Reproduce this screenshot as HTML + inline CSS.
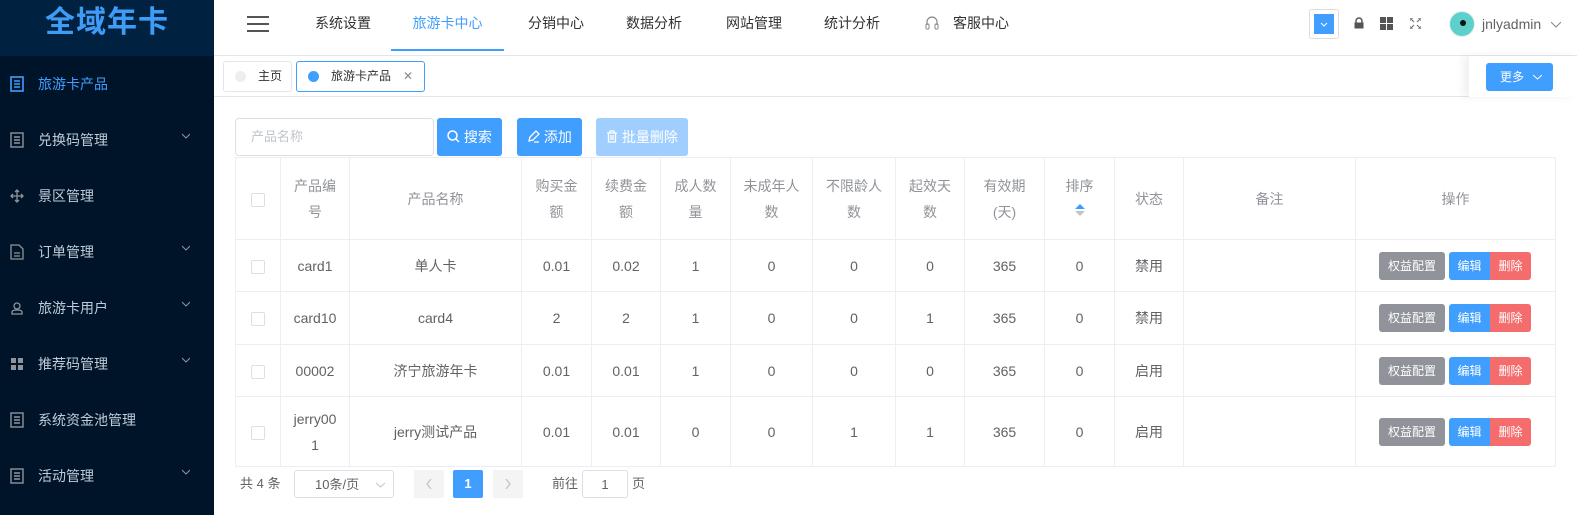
<!DOCTYPE html>
<html><head><meta charset="utf-8"><style>
*{box-sizing:border-box;margin:0;padding:0}
body{width:1577px;height:515px;overflow:hidden;background:#fff;font-family:"Liberation Sans","Noto Sans CJK SC",sans-serif;font-size:14px;color:#606266;position:relative}
.side{position:absolute;left:0;top:0;width:214px;height:515px;background:#001429}
.logo{height:56px;background:#002140;color:#3e9cf7;font-size:30px;font-weight:bold;text-align:center;line-height:46px;letter-spacing:1px}
.mi{position:absolute;left:0;width:214px;height:56px;color:#bfcbd9;font-size:14px;line-height:56px;padding-left:38px}
.mi .ic{position:absolute;left:10px;top:20px;width:14px;height:16px}
.mi .ar{position:absolute;right:24px;top:20px;width:8px;height:8px}
.top{position:absolute;left:214px;top:0;width:1363px;height:56px;border-bottom:1px solid #e6e6e6}
.nav{position:absolute;top:0;height:56px;line-height:46px;font-size:14px;color:#303133}
.tabs{position:absolute;left:214px;top:56px;width:1363px;height:41px;border-bottom:1px solid #e6e6e6}
.tab{position:absolute;top:5px;height:31px;border:1px solid #e6e6e6;border-radius:3px;font-size:12px;line-height:29px;color:#303133}
.dot{position:absolute;left:11px;top:9px;width:11px;height:11px;border-radius:50%}
.btn{position:absolute;top:118px;height:38px;border-radius:3px;background:#409eff;color:#fff;font-size:14px;line-height:38px;text-align:center}
table{position:absolute;left:235px;top:157px;width:1320px;border-collapse:collapse;table-layout:fixed}
td{border:1px solid #ebeef5;text-align:center;font-size:14px;color:#606266;line-height:26px}
thead td{color:#909399;height:82px}
.cb{display:inline-block;width:14px;height:14px;border:1px solid #dcdfe6;border-radius:2px;vertical-align:middle;background:#fff}
.op{display:inline-block;height:28px;line-height:28px;font-size:12px;color:#fff;text-align:center;vertical-align:middle}
.pg{position:absolute;top:470px;height:28px;line-height:28px;font-size:13px}
</style></head><body>
<div class="side">
<div class="logo">全域年卡</div>
<div class="mi" style="top:56px;color:#409eff"><svg class="ic" viewBox="0 0 14 16"><rect x="1" y="1" width="12" height="14" fill="none" stroke="#409eff" stroke-width="1.6"/><path d="M4 5h6M4 8h6M4 11h6" stroke="#409eff" stroke-width="1.5"/></svg>旅游卡产品</div>
<div class="mi" style="top:112px"><svg class="ic" viewBox="0 0 14 16"><rect x="1" y="1" width="12" height="14" fill="none" stroke="#909399" stroke-width="1.4"/><path d="M4 5h6M4 8h6M4 11h6" stroke="#909399" stroke-width="1.4"/></svg>兑换码管理<svg class="ar" viewBox="0 0 8 8"><path d="M0 2l4 4 4-4" fill="none" stroke="#8a96a3"/></svg></div>
<div class="mi" style="top:168px"><svg class="ic" viewBox="0 0 14 16"><path d="M7 2v12M1 8h12M5 4l2-2 2 2M5 12l2 2 2-2M3 6l-2 2 2 2M11 6l2 2-2 2" fill="none" stroke="#909399" stroke-width="1.3"/></svg>景区管理</div>
<div class="mi" style="top:224px"><svg class="ic" viewBox="0 0 14 16"><path d="M1 1h8l4 4v10H1z" fill="none" stroke="#909399" stroke-width="1.3"/><path d="M4 9h6M4 12h6" stroke="#909399" stroke-width="1.3"/></svg>订单管理<svg class="ar" viewBox="0 0 8 8"><path d="M0 2l4 4 4-4" fill="none" stroke="#8a96a3"/></svg></div>
<div class="mi" style="top:280px"><svg class="ic" viewBox="0 0 14 16"><circle cx="7" cy="6" r="3" fill="none" stroke="#909399" stroke-width="1.3"/><path d="M2 14v-2q0-2 5-2t5 2v2z" fill="none" stroke="#909399" stroke-width="1.3"/></svg>旅游卡用户<svg class="ar" viewBox="0 0 8 8"><path d="M0 2l4 4 4-4" fill="none" stroke="#8a96a3"/></svg></div>
<div class="mi" style="top:336px"><svg class="ic" viewBox="0 0 14 16"><rect x="1" y="2" width="5" height="5" fill="#909399"/><rect x="8" y="2" width="5" height="5" fill="#909399"/><rect x="1" y="9" width="5" height="5" fill="#909399"/><rect x="8" y="9" width="5" height="5" fill="#909399"/></svg>推荐码管理<svg class="ar" viewBox="0 0 8 8"><path d="M0 2l4 4 4-4" fill="none" stroke="#8a96a3"/></svg></div>
<div class="mi" style="top:392px"><svg class="ic" viewBox="0 0 14 16"><rect x="1" y="1" width="12" height="14" fill="none" stroke="#909399" stroke-width="1.4"/><path d="M4 5h6M4 8h6M4 11h6" stroke="#909399" stroke-width="1.4"/></svg>系统资金池管理</div>
<div class="mi" style="top:448px"><svg class="ic" viewBox="0 0 14 16"><rect x="1" y="1" width="12" height="14" fill="none" stroke="#909399" stroke-width="1.4"/><path d="M4 5h6M4 8h6M4 11h6" stroke="#909399" stroke-width="1.4"/></svg>活动管理<svg class="ar" viewBox="0 0 8 8"><path d="M0 2l4 4 4-4" fill="none" stroke="#8a96a3"/></svg></div>
</div>

<div class="top">
<svg style="position:absolute;left:33px;top:15px" width="22" height="18"><path d="M0 2h22M0 9h22M0 16h22" stroke="#555" stroke-width="2"/></svg>
<div class="nav" style="left:101px">系统设置</div>
<div class="nav" style="left:177px;width:113px;text-align:center;color:#409eff;border-bottom:2px solid #409eff;height:51px">旅游卡中心</div>
<div class="nav" style="left:314px">分销中心</div>
<div class="nav" style="left:412px">数据分析</div>
<div class="nav" style="left:512px">网站管理</div>
<div class="nav" style="left:610px">统计分析</div>
<svg style="position:absolute;left:711px;top:15px" width="14" height="16"><path d="M2 10V7a5 5 0 0 1 10 0v3" fill="none" stroke="#888" stroke-width="1.2"/><rect x="1" y="9" width="3" height="5" rx="1" fill="none" stroke="#888"/><rect x="10" y="9" width="3" height="5" rx="1" fill="none" stroke="#888"/></svg>
<div class="nav" style="left:739px">客服中心</div>
<div style="position:absolute;left:1095px;top:9px;width:30px;height:30px;border:1px solid #ddd;border-radius:3px"><div style="position:absolute;left:4px;top:4px;width:20px;height:20px;background:#409eff"><svg width="20" height="20"><path d="M7 9l3 3 3-3" fill="none" stroke="#fff"/></svg></div></div>
<svg style="position:absolute;left:1139px;top:17px" width="12" height="12"><path d="M3 6V4a3 3 0 0 1 6 0v2" fill="none" stroke="#555" stroke-width="1.5"/><rect x="1.5" y="5.5" width="9" height="6" fill="#555"/></svg>
<svg style="position:absolute;left:1166px;top:17px" width="13" height="13"><rect x="0" y="0" width="6" height="6" fill="#555"/><rect x="7" y="0" width="6" height="6" fill="#555"/><rect x="0" y="7" width="6" height="6" fill="#555"/><rect x="7" y="7" width="6" height="6" fill="#555"/></svg>
<svg style="position:absolute;left:1196px;top:18px" width="11" height="11"><path d="M0 3V0h3M8 0h3v3M11 8v3H8M3 11H0V8M1 1l3 3M10 1L7 4M10 10L7 7M1 10l3-3" fill="none" stroke="#666" stroke-width="1"/></svg>
<div style="position:absolute;left:1235px;top:11px;width:26px;height:26px;border-radius:50%;background:#5ed0cc;border:1px solid #eee"></div>
<div style="position:absolute;left:1246px;top:20px;width:6px;height:6px;border-radius:50%;background:#111"></div>
<div class="nav" style="left:1268px;color:#606266;line-height:48px">jnlyadmin</div>
<svg style="position:absolute;left:1337px;top:20px" width="10" height="8"><path d="M0 2l5 5 5-5" fill="none" stroke="#888"/></svg>
</div>

<div class="tabs">
<div class="tab" style="left:9px;width:69px;padding-left:34px"><span class="dot" style="background:#eee"></span>主页</div>
<div class="tab" style="left:82px;width:129px;padding-left:34px;border-color:#409eff"><span class="dot" style="background:#409eff"></span>旅游卡产品<span style="position:absolute;right:11px;color:#888">✕</span></div>
<div style="position:absolute;left:1255px;top:0;width:108px;height:41px;box-shadow:-6px 0 8px rgba(0,0,0,.06);background:#fff"><div style="position:absolute;left:17px;top:7px;width:67px;height:28px;background:#409eff;border-radius:3px;color:#fff;font-size:12px;line-height:28px;padding-left:14px">更多<svg style="position:absolute;left:47px;top:11px" width="9" height="6"><path d="M0 1l4.5 4 4.5-4" fill="none" stroke="#fff"/></svg></div></div>
</div>

<div style="position:absolute;left:235px;top:118px;width:199px;height:38px;border:1px solid #dcdfe6;border-radius:4px;color:#c0c4cc;font-size:13px;line-height:36px;padding-left:15px">产品名称</div>
<div class="btn" style="left:437px;width:65px"><svg width="13" height="13" style="vertical-align:-1px"><circle cx="5.5" cy="5.5" r="4.5" fill="none" stroke="#fff" stroke-width="1.5"/><path d="M9 9l3 3" stroke="#fff" stroke-width="1.5"/></svg> 搜索</div>
<div class="btn" style="left:517px;width:65px"><svg width="13" height="13" style="vertical-align:-1px"><path d="M2 11l1-4 6-6 3 3-6 6zM7 12h5" fill="none" stroke="#fff" stroke-width="1.3"/></svg> 添加</div>
<div class="btn" style="left:596px;width:92px;background:#a0cfff"><svg width="12" height="13" style="vertical-align:-1px"><path d="M1 3h10M4 3V1h4v2M2.5 3v9h7V3M5 5v5M7 5v5" fill="none" stroke="#fff" stroke-width="1.3"/></svg> 批量删除</div>

<table>
<colgroup><col style="width:45px"><col style="width:69px"><col style="width:172px"><col style="width:70px"><col style="width:69px"><col style="width:70px"><col style="width:82px"><col style="width:83px"><col style="width:69px"><col style="width:80px"><col style="width:70px"><col style="width:69px"><col style="width:172px"><col style="width:200px"></colgroup>
<thead><tr><td><span class="cb"></span></td><td>产品编<br>号</td><td>产品名称</td><td>购买金<br>额</td><td>续费金<br>额</td><td>成人数<br>量</td><td>未成年人<br>数</td><td>不限龄人<br>数</td><td>起效天<br>数</td><td>有效期<br>(天)</td><td>排序<br><svg width="10" height="14"><path d="M5 1l5 5H0z" fill="#409eff"/><path d="M5 13l5-5H0z" fill="#c0c4cc"/></svg></td><td>状态</td><td>备注</td><td>操作</td></tr></thead>
<tbody>
<tr style="height:52px"><td><span class="cb"></span></td><td>card1</td><td>单人卡</td><td>0.01</td><td>0.02</td><td>1</td><td>0</td><td>0</td><td>0</td><td>365</td><td>0</td><td>禁用</td><td></td><td style="text-align:left;padding-left:23px"><span class="op" style="width:66px;background:#909399;border-radius:3px">权益配置</span><span class="op" style="width:41px;background:#409eff;margin-left:4px;border-radius:3px 0 0 3px">编辑</span><span class="op" style="width:41px;background:#f56c6c;border-radius:0 3px 3px 0">删除</span></td></tr>
<tr style="height:53px"><td><span class="cb"></span></td><td>card10</td><td>card4</td><td>2</td><td>2</td><td>1</td><td>0</td><td>0</td><td>1</td><td>365</td><td>0</td><td>禁用</td><td></td><td style="text-align:left;padding-left:23px"><span class="op" style="width:66px;background:#909399;border-radius:3px">权益配置</span><span class="op" style="width:41px;background:#409eff;margin-left:4px;border-radius:3px 0 0 3px">编辑</span><span class="op" style="width:41px;background:#f56c6c;border-radius:0 3px 3px 0">删除</span></td></tr>
<tr style="height:52px"><td><span class="cb"></span></td><td>00002</td><td>济宁旅游年卡</td><td>0.01</td><td>0.01</td><td>1</td><td>0</td><td>0</td><td>0</td><td>365</td><td>0</td><td>启用</td><td></td><td style="text-align:left;padding-left:23px"><span class="op" style="width:66px;background:#909399;border-radius:3px">权益配置</span><span class="op" style="width:41px;background:#409eff;margin-left:4px;border-radius:3px 0 0 3px">编辑</span><span class="op" style="width:41px;background:#f56c6c;border-radius:0 3px 3px 0">删除</span></td></tr>
<tr style="height:70px"><td><span class="cb"></span></td><td>jerry00<br>1</td><td>jerry测试产品</td><td>0.01</td><td>0.01</td><td>0</td><td>0</td><td>1</td><td>1</td><td>365</td><td>0</td><td>启用</td><td></td><td style="text-align:left;padding-left:23px"><span class="op" style="width:66px;background:#909399;border-radius:3px">权益配置</span><span class="op" style="width:41px;background:#409eff;margin-left:4px;border-radius:3px 0 0 3px">编辑</span><span class="op" style="width:41px;background:#f56c6c;border-radius:0 3px 3px 0">删除</span></td></tr>
</tbody></table>

<div class="pg" style="left:240px">共 4 条</div>
<div class="pg" style="left:294px;width:100px;border:1px solid #dcdfe6;border-radius:3px;padding-left:20px">10条/页<svg style="position:absolute;right:8px;top:11px" width="9" height="6"><path d="M0 1l4.5 4 4.5-4" fill="none" stroke="#c0c4cc"/></svg></div>
<div class="pg" style="left:414px;width:30px;background:#f4f4f5"><svg style="position:absolute;left:12px;top:9px" width="6" height="10"><path d="M5 0L1 5l4 5" fill="none" stroke="#c0c4cc" stroke-width="1.3"/></svg></div>
<div class="pg" style="left:453px;width:30px;background:#409eff;color:#fff;text-align:center;font-weight:bold;border-radius:2px">1</div>
<div class="pg" style="left:493px;width:30px;background:#f4f4f5"><svg style="position:absolute;left:12px;top:9px" width="6" height="10"><path d="M1 0l4 5-4 5" fill="none" stroke="#c0c4cc" stroke-width="1.3"/></svg></div>
<div class="pg" style="left:552px">前往</div>
<div class="pg" style="left:582px;width:46px;border:1px solid #dcdfe6;border-radius:3px;text-align:center">1</div>
<div class="pg" style="left:632px">页</div>
</body></html>
